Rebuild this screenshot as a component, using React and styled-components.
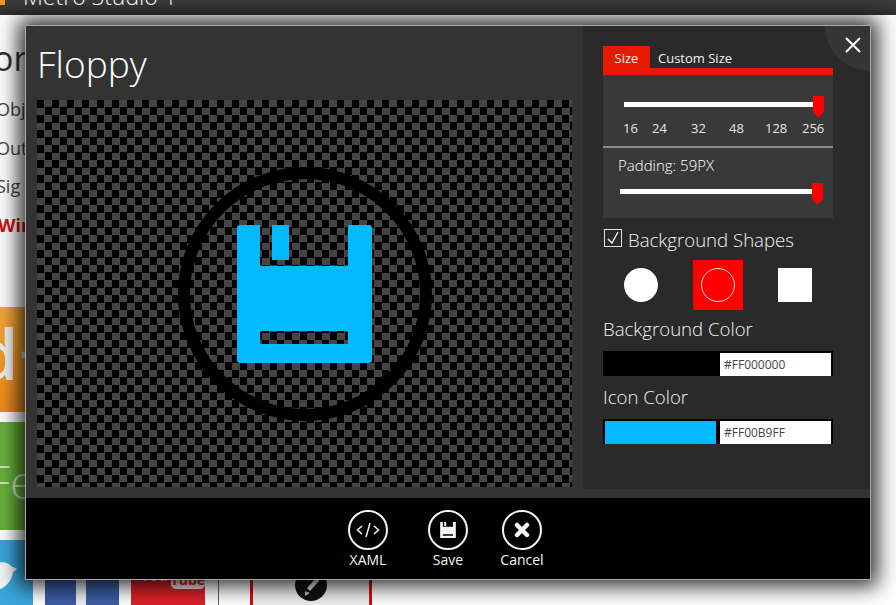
import styled, { createGlobalStyle } from "styled-components";

const GlobalStyle = createGlobalStyle`
  html, body {
    margin: 0;
    padding: 0;
    background: #fff;
  }
  * {
    box-sizing: border-box;
  }
  body {
    font-family: "Open Sans", "Noto Sans", "Liberation Sans", sans-serif;
  }
`;

const Page = styled.div`
  position: relative;
  width: 896px;
  height: 605px;
  overflow: hidden;
  background: #fff;
`;

/* app behind the dialog */
const TitleBar = styled.div`
  display: flex;
  align-items: flex-end;
  gap: 18px;
  height: 15px;
  overflow: hidden;
  background: linear-gradient(#3c3c3c, #2f2f2f);
  color: #fff;
  font-size: 23px;
  font-weight: 300;
  line-height: 24px;
`;

const AppIcon = styled.div`
  width: 5px;
  height: 5px;
  margin-bottom: 10px;
  background: #f39a1f;
`;

const AppName = styled.div`
  margin-bottom: 7px;
`;

const Heading = styled.div`
  margin: 20px 0 0 -7px;
  height: 46px;
  color: #333;
  font-size: 34px;
  line-height: 46px;
`;

const Lines = styled.div`
  margin-top: 9px;
  height: 160px;
`;

const Line = styled.div`
  height: 38.6px;
  margin-left: ${(p) => (p.$red ? "-2px" : "-4px")};
  color: ${(p) => (p.$red ? "#d3100f" : "#444")};
  font-size: 18px;
  font-weight: ${(p) => (p.$red ? 700 : 400)};
  line-height: 38.6px;
`;

const Tile = styled.div`
  width: 60px;
  height: ${(p) => p.$height}px;
  margin-top: ${(p) => p.$top}px;
  overflow: hidden;
  background: ${(p) => p.$bg};
  color: #f2f2f2;
`;

const OrangeGlyph = styled.div`
  margin: 6px 0 0 -25px;
  font-size: 70px;
  font-weight: 600;
  line-height: 80px;
  white-space: nowrap;
`;

const GreenGlyph = styled.div`
  margin: 34px 0 0 -13px;
  color: #cfe8c0;
  font-size: 46px;
  font-weight: 300;
  line-height: 50px;
  white-space: nowrap;
`;

const BottomRow = styled.div`
  display: flex;
  height: 65px;
  margin-top: 10px;
  overflow: hidden;
`;

const SocialTile = styled.div`
  flex: none;
  width: ${(p) => p.$width}px;
  margin-left: ${(p) => p.$left}px;
  background: ${(p) => p.$bg};
`;

const FacebookTile = styled(SocialTile)`
  display: flex;
  justify-content: center;
  padding: 40px 2px 0 0;
`;

const FacebookBar = styled.div`
  width: 10px;
  background: #e8edf5;
`;

const YoutubeTile = styled(SocialTile)`
  display: flex;
  align-items: flex-end;
  gap: 3px;
  padding: 0 0 20px 10px;
  color: #f3d6d6;
  font-size: 14px;
  font-weight: 700;
  line-height: 18px;
`;

const TubeBox = styled.div`
  width: 34px;
  margin-bottom: -4px;
  border-radius: 0 0 5px 5px;
  background: #eee;
  color: #d8262c;
  text-align: center;
`;

const Rule = styled.div`
  flex: none;
  width: 1px;
  margin-left: 13px;
  background: #666;
`;

const VideoCard = styled.div`
  flex: none;
  display: flex;
  justify-content: center;
  width: 122px;
  margin-left: 31px;
  padding-top: 29px;
  border-left: 3px solid #d3100f;
  border-right: 3px solid #d3100f;
  background: #eee;
`;

/* dialog */
const Dialog = styled.div`
  position: absolute;
  top: 25px;
  left: 25px;
  width: 846px;
  height: 555px;
  display: flex;
  flex-direction: column;
  border: 1px solid #a8a8a8;
  background: #333;
  box-shadow: 0 0 20px 6px rgba(0, 0, 0, 0.85);
`;

const DialogBody = styled.div`
  display: flex;
  height: 463px;
`;

const PreviewPane = styled.div`
  width: 557px;
  padding: 0 0 0 11px;
  background: #333;
`;

const Title = styled.div`
  height: 74px;
  color: #fff;
  font-size: 37px;
  font-weight: 300;
  line-height: 76px;
`;

const Checker = styled.div`
  display: flex;
  align-items: center;
  justify-content: center;
  width: 535px;
  height: 387px;
  background: repeating-conic-gradient(#444 0 25%, #000 0 50%) 0 0 / 15px 15px;
`;

const SidePane = styled.div`
  position: relative;
  width: 287px;
  padding: 20px 0 0 20px;
  background: #2a2a2a;
  color: #eee;
`;

const CloseCorner = styled.div`
  position: absolute;
  top: 0;
  right: 0;
  display: flex;
  align-items: center;
  justify-content: center;
  width: 45px;
  height: 45px;
  padding: 0 0 8px 10px;
  border-bottom-left-radius: 45px;
  background: #353535;
`;

const Tabs = styled.div`
  display: flex;
  width: 230px;
  height: 29px;
  border-bottom: 7px solid #e51a00;
`;

const Tab = styled.div`
  width: ${(p) => (p.$active ? "47px" : "auto")};
  padding-left: ${(p) => (p.$active ? "0" : "8px")};
  background: ${(p) => (p.$active ? "#e51a00" : "transparent")};
  color: #f2f2f2;
  font-size: 13px;
  line-height: 24px;
  text-align: ${(p) => (p.$active ? "center" : "left")};
`;

const SizePanel = styled.div`
  width: 230px;
  height: 143px;
  background: #393939;
`;

const SizeSection = styled.div`
  height: 73px;
  padding: 21px 9px 0 21px;
  border-bottom: 2px solid #8a8a8a;
`;

const PaddingSection = styled.div`
  padding: 6px 10px 0 17px;
`;

const SliderRow = styled.div`
  display: flex;
`;

const Track = styled.div`
  flex: 1;
  height: 5px;
  margin-top: 6px;
  background: #fff;
`;

const Thumb = styled.div`
  width: 11px;
  height: 22px;
  background: #f00;
  clip-path: polygon(0 0, 100% 0, 100% 72%, 50% 100%, 0 72%);
`;

const Ticks = styled.div`
  display: grid;
  grid-template-columns: 29px 39px 38px 36px 37px auto;
  margin: 1px 0 0 -1px;
  color: #e4e4e4;
  font-size: 13px;
  line-height: 18px;
`;

const PaddingLabel = styled.div`
  height: 29px;
  margin-left: -2px;
  color: #fff;
  font-size: 15px;
  font-weight: 300;
  line-height: 22px;
`;

const CheckRow = styled.div`
  display: flex;
  align-items: center;
  gap: 6px;
  margin: 11px 0 0 1px;
  height: 18px;
`;

const CheckBox = styled.div`
  display: flex;
  align-items: center;
  justify-content: center;
  width: 18px;
  height: 18px;
  border: 1px solid #e0e0e0;
`;

const SectionLabel = styled.div`
  color: #f2f2f2;
  font-size: 18.6px;
  font-weight: 300;
  line-height: 26px;
  white-space: nowrap;
  margin: ${(p) => p.$margin || 0};
`;

const Shapes = styled.div`
  display: grid;
  grid-template-columns: repeat(3, 1fr);
  width: 230px;
  height: 50px;
  margin-top: 13px;
`;

const ShapeCell = styled.div`
  display: flex;
  align-items: center;
  justify-content: center;
  width: 50px;
  height: 50px;
  justify-self: center;
  background: ${(p) => (p.$selected ? "#f00" : "transparent")};
`;

const Shape = styled.div`
  width: 34px;
  height: 34px;
  border-radius: ${(p) => (p.$square ? "0" : "50%")};
  background: ${(p) => (p.$outline ? "transparent" : "#fff")};
  border: ${(p) => (p.$outline ? "1.5px solid #f6e4e4" : "none")};
`;

const ColorRow = styled.div`
  display: grid;
  grid-template-columns: 1fr 111px;
  gap: 4px;
  width: 230px;
  height: 25px;
  padding: 2px;
  background: #000;
`;

const Swatch = styled.div`
  background: ${(p) => p.$color};
`;

const ColorValue = styled.div`
  padding-left: 4px;
  background: #fff;
  color: #444;
  font-size: 12px;
  line-height: 23px;
`;

const Strip = styled.div`
  height: 9px;
  background: #333;
`;

const Footer = styled.div`
  flex: 1;
  display: flex;
  padding: 12px 0 0 302px;
  background: #000;
`;

const FooterButton = styled.div`
  display: flex;
  flex-direction: column;
  align-items: center;
  width: ${(p) => p.$width}px;
  color: #f4f4f4;
  font-size: 14px;
  line-height: 20px;
`;

const RoundIcon = styled.div`
  display: flex;
  align-items: center;
  justify-content: center;
  width: 40px;
  height: 40px;
  border: 2px solid #f4f4f4;
  border-radius: 50%;
`;

const FLOPPY =
  "M3 0H23V41H111V0H132A3 3 0 0 1 135 3V135A3 3 0 0 1 132 138H3A3 3 0 0 1 0 135V3A3 3 0 0 1 3 0ZM23 106V119H111V106Z";

function PreviewIcon() {
  return (
    <svg width="256" height="256" viewBox="0 0 256 256">
      <circle cx="128" cy="128" r="121" fill="none" stroke="#000" strokeWidth="12" />
      <g transform="translate(60 59)">
        <path d={FLOPPY} fill="#00b9ff" fillRule="evenodd" />
        <rect x="35" y="0" width="17" height="35" fill="#00b9ff" />
      </g>
    </svg>
  );
}

function Slider() {
  return (
    <SliderRow>
      <Track />
      <Thumb />
    </SliderRow>
  );
}

function ColorField({ color, value }) {
  return (
    <ColorRow>
      <Swatch $color={color} />
      <ColorValue>{value}</ColorValue>
    </ColorRow>
  );
}

export default function App() {
  return (
    <Page>
      <GlobalStyle />
      <TitleBar>
        <AppIcon />
        <AppName>Metro Studio 1</AppName>
      </TitleBar>
      <Heading>or</Heading>
      <Lines>
        <Line>Obj</Line>
        <Line>Out</Line>
        <Line>Sig</Line>
        <Line $red>Win</Line>
      </Lines>
      <Tile $height={105} $top={57} $bg="linear-gradient(#f4a93a, #ee8a1b)">
        <OrangeGlyph>d+</OrangeGlyph>
      </Tile>
      <Tile $height={108} $top={10} $bg="#69b13c">
        <GreenGlyph>Fe</GreenGlyph>
      </Tile>
      <BottomRow>
        <SocialTile $width={33} $left={0} $bg="#3aa6dc">
          <svg width="33" height="65" viewBox="0 0 33 65">
            <path d="M-8 26C0 20 8 22 11 26L17 29L13 32C12 42 2 52 -8 50Z" fill="#f5f5f5" />
          </svg>
        </SocialTile>
        <FacebookTile $width={74} $left={12} $bg="#3b5da3">
          <FacebookBar />
        </FacebookTile>
        <YoutubeTile $width={74} $left={12} $bg="#dc2229">
          <span>You</span>
          <TubeBox>Tube</TubeBox>
        </YoutubeTile>
        <Rule />
        <VideoCard>
          <svg width="32" height="32" viewBox="0 0 32 32">
            <circle cx="16" cy="16" r="16" fill="#111" />
            <path d="M12 19L21 9L24 12L15 22Z" fill="#eee" />
            <path d="M10 22L15 24L10 27Z" fill="#bbb" />
          </svg>
        </VideoCard>
      </BottomRow>

      <Dialog>
        <DialogBody>
          <PreviewPane>
            <Title>Floppy</Title>
            <Checker>
              <PreviewIcon />
            </Checker>
          </PreviewPane>
          <SidePane>
            <CloseCorner>
              <svg width="16" height="16" viewBox="0 0 16 16">
                <path d="M1 1L15 15M15 1L1 15" stroke="#fff" strokeWidth="2" />
              </svg>
            </CloseCorner>
            <Tabs>
              <Tab $active>Size</Tab>
              <Tab>Custom Size</Tab>
            </Tabs>
            <SizePanel>
              <SizeSection>
                <Slider />
                <Ticks>
                  <span>16</span>
                  <span>24</span>
                  <span>32</span>
                  <span>48</span>
                  <span>128</span>
                  <span>256</span>
                </Ticks>
              </SizeSection>
              <PaddingSection>
                <PaddingLabel>Padding: 59PX</PaddingLabel>
                <Slider />
              </PaddingSection>
            </SizePanel>
            <CheckRow>
              <CheckBox>
                <svg width="14" height="14" viewBox="0 0 14 14">
                  <path d="M2 8L6 12L12 1" fill="none" stroke="#eee" strokeWidth="1.4" />
                </svg>
              </CheckBox>
              <SectionLabel $margin="4px 0 0">Background Shapes</SectionLabel>
            </CheckRow>
            <Shapes>
              <ShapeCell>
                <Shape />
              </ShapeCell>
              <ShapeCell $selected>
                <Shape $outline />
              </ShapeCell>
              <ShapeCell>
                <Shape $square />
              </ShapeCell>
            </Shapes>
            <SectionLabel $margin="6px 0 9px">Background Color</SectionLabel>
            <ColorField color="#000" value="#FF000000" />
            <SectionLabel $margin="8px 0 9px">Icon Color</SectionLabel>
            <ColorField color="#00b9ff" value="#FF00B9FF" />
          </SidePane>
        </DialogBody>
        <Strip />
        <Footer>
          <FooterButton $width={80}>
            <RoundIcon>
              <svg width="24" height="16" viewBox="0 0 24 16">
                <path
                  d="M6 4L1.5 8L6 12M18 4L22.500 8L18 12M14 1L10 15"
                  fill="none"
                  stroke="#f4f4f4"
                  strokeWidth="1.5"
                />
              </svg>
            </RoundIcon>
            XAML
          </FooterButton>
          <FooterButton $width={80}>
            <RoundIcon>
              <svg width="16" height="16" viewBox="0 0 135 138">
                <path d={FLOPPY} fill="#f4f4f4" fillRule="evenodd" />
                <rect x="35" y="0" width="17" height="35" fill="#f4f4f4" />
              </svg>
            </RoundIcon>
            Save
          </FooterButton>
          <FooterButton $width={68}>
            <RoundIcon>
              <svg width="16" height="16" viewBox="0 0 16 16">
                <path
                  d="M3 3L13 13M13 3L3 13"
                  stroke="#f4f4f4"
                  strokeWidth="4.5"
                  strokeLinecap="round"
                />
              </svg>
            </RoundIcon>
            Cancel
          </FooterButton>
        </Footer>
      </Dialog>
    </Page>
  );
}
